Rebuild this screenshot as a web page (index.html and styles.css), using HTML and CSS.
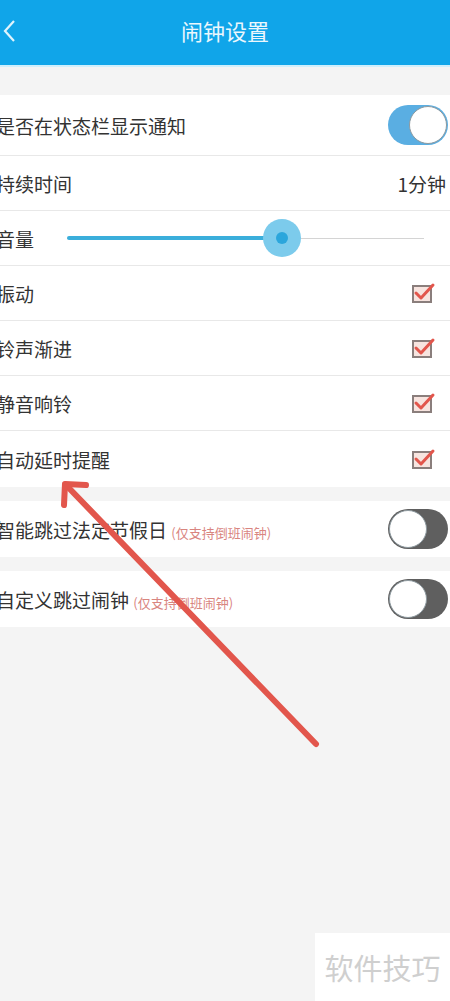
FILE: index.html
```html
<!DOCTYPE html>
<html lang="zh-CN">
<head>
    <meta charset="UTF-8">
    <meta name="viewport" content="width=device-width, initial-scale=1.0">
    <title>闹钟设置</title>
    <link rel="stylesheet" href="styles.css">
</head>
<body>
    <header class="topbar">
        <svg class="back" width="14" height="24" viewBox="0 0 14 24"><path d="M12 2 L3 12 L12 22" fill="none" stroke="#dff3fc" stroke-width="2.2"/></svg>
        <h1>闹钟设置</h1>
    </header>

    <div class="group first">
        <div class="row tall">
            <span class="label">是否在状态栏显示通知</span>
            <div class="switch on"><div class="knob"></div></div>
        </div>
        <div class="row">
            <span class="label">持续时间</span>
            <span class="value">1分钟</span>
        </div>
        <div class="row">
            <span class="label">音量</span>
            <div class="slider">
                <div class="fill"></div>
                <div class="thumb"><div class="dot"></div></div>
            </div>
        </div>
        <div class="row">
            <span class="label">振动</span>
            <svg class="check" width="24" height="22" viewBox="0 0 24 22"><rect x="1" y="4" width="18" height="16" fill="#f7e4df" stroke="#8a7e7c" stroke-width="2"/><path d="M4 11 L9 16 L21 3" fill="none" stroke="#e2564c" stroke-width="3" stroke-linecap="round" stroke-linejoin="round"/></svg>
        </div>
        <div class="row">
            <span class="label">铃声渐进</span>
            <svg class="check" width="24" height="22" viewBox="0 0 24 22"><rect x="1" y="4" width="18" height="16" fill="#f7e4df" stroke="#8a7e7c" stroke-width="2"/><path d="M4 11 L9 16 L21 3" fill="none" stroke="#e2564c" stroke-width="3" stroke-linecap="round" stroke-linejoin="round"/></svg>
        </div>
        <div class="row">
            <span class="label">静音响铃</span>
            <svg class="check" width="24" height="22" viewBox="0 0 24 22"><rect x="1" y="4" width="18" height="16" fill="#f7e4df" stroke="#8a7e7c" stroke-width="2"/><path d="M4 11 L9 16 L21 3" fill="none" stroke="#e2564c" stroke-width="3" stroke-linecap="round" stroke-linejoin="round"/></svg>
        </div>
        <div class="row last">
            <span class="label">自动延时提醒</span>
            <svg class="check" width="24" height="22" viewBox="0 0 24 22"><rect x="1" y="4" width="18" height="16" fill="#f7e4df" stroke="#8a7e7c" stroke-width="2"/><path d="M4 11 L9 16 L21 3" fill="none" stroke="#e2564c" stroke-width="3" stroke-linecap="round" stroke-linejoin="round"/></svg>
        </div>
    </div>

    <div class="group">
        <div class="row last">
            <span class="label">智能跳过法定节假日 <small>(仅支持倒班闹钟)</small></span>
            <div class="switch"><div class="knob"></div></div>
        </div>
    </div>

    <div class="group">
        <div class="row last">
            <span class="label">自定义跳过闹钟 <small>(仅支持倒班闹钟)</small></span>
            <div class="switch"><div class="knob"></div></div>
        </div>
    </div>

    <svg class="arrow" width="450" height="1001" viewBox="0 0 450 1001">
        <g fill="none" stroke="#e2564c" stroke-width="6" stroke-linecap="round" stroke-linejoin="round">
            <path d="M316 744 L66 485"/>
            <path d="M86 485 L65 484 L64 505"/>
        </g>
    </svg>

    <div class="mark">软件技巧</div>
</body>
</html>
```

FILE: styles.css
```css
body {
    margin: 0;
    padding: 0;
    background-color: #f4f4f4;
    font-family: "Noto Sans CJK SC", "Noto Sans", sans-serif;
    color: #333;
    height: 1001px;
    overflow: hidden;
    position: relative;
}
.topbar {
    height: 67px;
    box-sizing: border-box;
    padding-bottom: 6px;
    background-color: #10a5e9;
    border-bottom: 2px solid #cfeffc;
    display: flex;
    align-items: center;
    justify-content: center;
    position: relative;
}
.topbar h1 {
    margin: 0;
    font-size: 22px;
    font-weight: normal;
    color: #eaf7fd;
}
.back {
    position: absolute;
    left: 2px;
    top: 19px;
}
.group {
    background-color: #fff;
    margin-top: 14px;
}
.group.first {
    margin-top: 28px;
}
.row {
    height: 54px;
    display: flex;
    align-items: center;
    justify-content: space-between;
    padding-right: 4px;
    border-bottom: 1px solid #e8e8e8;
}
.row.tall {
    height: 60px;
}
.row.last {
    border-bottom: none;
    height: 56px;
}
.label {
    font-size: 19px;
    margin-left: -4px;
    white-space: nowrap;
}
.label small {
    font-size: 13px;
    color: #d9857f;
}
.value {
    font-size: 19px;
}
.switch {
    width: 60px;
    height: 40px;
    border-radius: 20px;
    background-color: #5f5f5f;
    position: relative;
    margin-right: -2px;
}
.switch.on {
    background-color: #5aaee2;
}
.knob {
    width: 36px;
    height: 36px;
    border-radius: 50%;
    background-color: #fff;
    border: 1px solid #8e9aa0;
    position: absolute;
    top: 1px;
    left: 1px;
}
.switch.on .knob {
    left: auto;
    right: 1px;
}
.slider {
    width: 357px;
    height: 1px;
    background-color: #d4d4d4;
    position: relative;
    margin-right: 22px;
}
.fill {
    width: 215px;
    height: 4px;
    background-color: #3aaedb;
    position: absolute;
    top: -2px;
    left: 0;
    border-radius: 2px;
}
.thumb {
    width: 38px;
    height: 38px;
    border-radius: 50%;
    background-color: #7ccbec;
    position: absolute;
    left: 196px;
    top: -19px;
    display: flex;
    align-items: center;
    justify-content: center;
}
.dot {
    width: 12px;
    height: 12px;
    border-radius: 50%;
    background-color: #2ba6dc;
}
.check {
    margin-right: 10px;
}
.arrow {
    position: absolute;
    left: 0;
    top: 0;
    pointer-events: none;
}
.mark {
    position: absolute;
    right: 0;
    bottom: 0;
    width: 135px;
    height: 68px;
    background-color: #fff;
    color: #cfcfcf;
    font-size: 29px;
    display: flex;
    align-items: center;
    justify-content: center;
}
```
